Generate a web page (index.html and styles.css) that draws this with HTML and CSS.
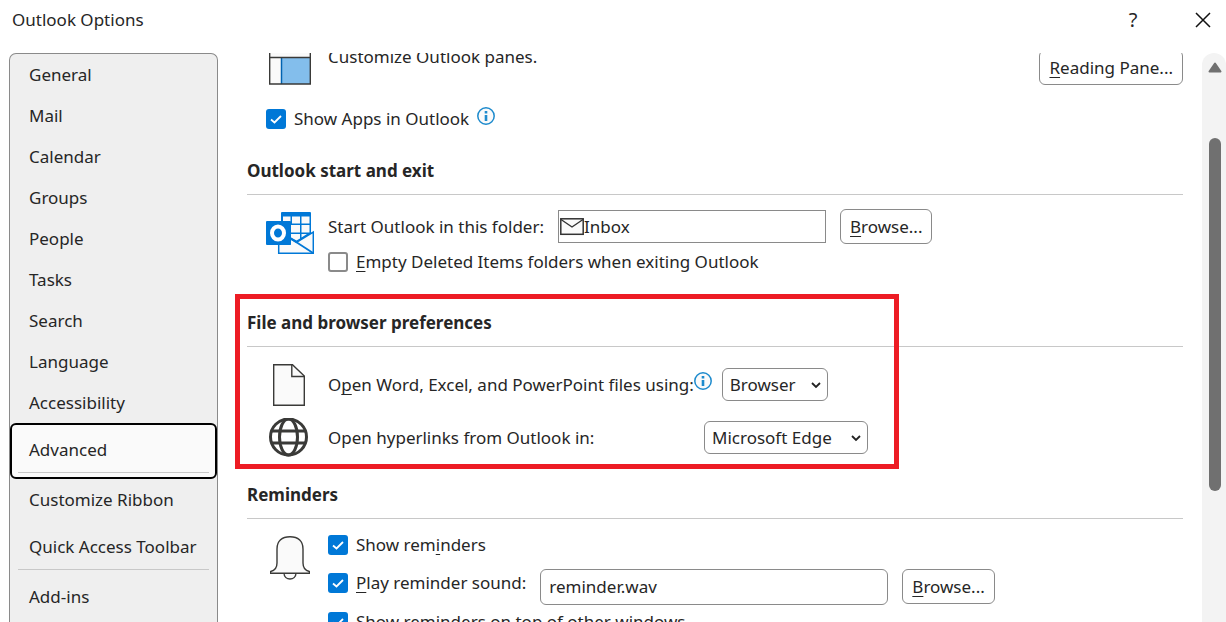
FILE: index.html
```html
<!DOCTYPE html>
<html lang="en">
<head>
  <meta charset="UTF-8" />
  <meta name="viewport" content="width=device-width, initial-scale=1.0"/>
  <title>Outlook Options</title>
  <link rel="stylesheet" href="styles.css">
</head>
<body>
  <header class="titlebar">
    <h1>Outlook Options</h1>
    <button class="title-button help" type="button">?</button>
    <button class="title-button" type="button" aria-label="Close">
      <svg width="16" height="16" viewBox="0 0 16 16"><path d="M1 1L15 15M15 1L1 15" fill="none" stroke="#111" stroke-width="1.5"/></svg>
    </button>
  </header>

  <div class="dialog">
    <nav class="sidebar">
      <a href="#general">General</a>
      <a href="#mail">Mail</a>
      <a href="#calendar">Calendar</a>
      <a href="#groups">Groups</a>
      <a href="#people">People</a>
      <a href="#tasks">Tasks</a>
      <a href="#search">Search</a>
      <a href="#language">Language</a>
      <a href="#accessibility">Accessibility</a>
      <a class="active" href="#advanced">Advanced</a>
      <a href="#ribbon">Customize Ribbon</a>
      <a class="group-end" href="#toolbar">Quick Access Toolbar</a>
      <a class="addins" href="#addins">Add-ins</a>
    </nav>

    <main class="pane">
      <section class="panes">
        <div class="panes-row">
          <svg class="panes-icon" width="42" height="40" viewBox="0 0 42 40">
            <rect x="1" y="-10" width="40" height="49" fill="#fafafa"/>
            <rect x="13" y="13" width="28" height="26" fill="#83beec"/>
            <path d="M12.500 13V39" stroke="#0063b1" stroke-width="1.500"/>
            <path d="M.7 0V39H41.300V0M0 12.500H42" fill="none" stroke="#3a3a38" stroke-width="1.400"/>
          </svg>
          <span>Customize Outlook panes.</span>
          <button class="button" type="button"><u>R</u>eading Pane...</button>
        </div>
        <div class="check-row show-apps">
          <input type="checkbox" id="show-apps" checked>
          <label for="show-apps">Show Apps in Outlook</label>
          <svg class="info" width="18" height="18" viewBox="0 0 18 18"><circle cx="9" cy="9" r="8.200" fill="#fafafa" stroke="#1e8bcd" stroke-width="1.500"/><path d="M9 4V6.500M9 8V14" stroke="#1e8bcd" stroke-width="2.600"/></svg>
        </div>
      </section>

      <section class="start">
        <h2>Outlook start and exit</h2>
        <div class="section-body">
          <svg class="outlook-icon" width="48" height="42" viewBox="0 0 48 42">
            <rect x="15" y="0" width="30" height="30" rx="1" fill="#0078d7"/>
            <path d="M17 4.500h7.500v7H17zM26 4.500h8v7h-8zM35.500 4.500H43.500v7h-8zM25 13h9v7.500h-9zM35.500 13H43.500v7.500h-8zM25 22h9v4.500l-3.500 2L25 25.500zM35.500 22H41l-5.500 3.500z" fill="#fafafa"/>
            <path d="M12.700 32V41.300H47.300V20L30.500 30.300L24 26.500V32z" fill="#fafafa" stroke="#0078d7" stroke-width="1.500"/>
            <path d="M24 26L47 41" stroke="#0078d7" stroke-width="1.800"/>
            <rect x="0" y="9" width="25" height="24" rx="1" fill="#0078d7"/>
            <ellipse cx="12" cy="21" rx="6" ry="6.500" fill="none" stroke="#fff" stroke-width="4"/>
          </svg>
          <div class="fields">
            <div class="field-row">
              <label for="folder">Start Outlook in this folder:</label>
              <div class="folder-box">
                <svg width="24" height="18" viewBox="0 0 24 18"><rect x=".8" y=".8" width="22.400" height="15.500" fill="#fafafa" stroke="#333" stroke-width="1.500"/><path d="M1 1.500L12 9L23 1.500" fill="none" stroke="#333" stroke-width="1.400"/></svg>
                <input type="text" id="folder" value="Inbox">
              </div>
              <button class="button" type="button"><u>B</u>rowse...</button>
            </div>
            <div class="check-row">
              <input type="checkbox" id="empty-deleted">
              <label for="empty-deleted"><u>E</u>mpty Deleted Items folders when exiting Outlook</label>
            </div>
          </div>
        </div>
      </section>

      <section class="files">
        <h2>File and browser preferences</h2>
        <div class="file-row">
          <svg width="44" height="42" viewBox="0 0 44 42"><path d="M6.700.7H25.500L37.300 12V41.300H6.700z" fill="#fafafa" stroke="#3a3a38" stroke-width="1.400"/><path d="M24.800 .7V12.500H37.300" fill="none" stroke="#3a3a38" stroke-width="1.400"/></svg>
          <label for="open-files">O<u>p</u>en Word, Excel, and PowerPoint files using:</label>
          <svg class="info" width="18" height="18" viewBox="0 0 18 18"><circle cx="9" cy="9" r="8.200" fill="#fafafa" stroke="#1e8bcd" stroke-width="1.500"/><path d="M9 4V6.500M9 8V14" stroke="#1e8bcd" stroke-width="2.600"/></svg>
          <select id="open-files" class="browser-select">
            <option>Browser</option>
          </select>
        </div>
        <div class="file-row">
          <svg width="44" height="40" viewBox="0 0 44 40"><g fill="none" stroke="#3a3a38" stroke-width="3"><circle cx="21.500" cy="19" r="18"/><ellipse cx="21.500" cy="19" rx="9" ry="18"/><path d="M4.500 13H38.500M4.500 25H38.500"/></g></svg>
          <label class="links-label" for="open-links">Open hyperlinks from Outlook in:</label>
          <select id="open-links" class="edge-select">
            <option>Microsoft Edge</option>
          </select>
        </div>
      </section>

      <section class="reminders">
        <h2>Reminders</h2>
        <div class="section-body">
          <svg class="bell-icon" width="48" height="46" viewBox="0 0 48 46">
            <path d="M18 38C18 46 30 46 30 38z" fill="#fafafa" stroke="#3a3a38" stroke-width="1.400"/>
            <path d="M11 14C11 6 16 1.700 24 1.700S37 6 37 14V28C37 33 39 35.500 43.300 36.500V38.300H4.700V36.500C9 35.500 11 33 11 28z" fill="#fafafa" stroke="#3a3a38" stroke-width="1.400"/>
          </svg>
          <div class="fields">
            <div class="check-row">
              <input type="checkbox" id="show-reminders" checked>
              <label for="show-reminders">Show rem<u>i</u>nders</label>
            </div>
            <div class="sound-row">
              <div class="check-row">
                <input type="checkbox" id="play-sound" checked>
                <label for="play-sound"><u>P</u>lay reminder sound:</label>
              </div>
              <input class="sound-file" type="text" value="reminder.wav" aria-label="Reminder sound file">
              <button class="button" type="button"><u>B</u>rowse...</button>
            </div>
            <div class="check-row">
              <input type="checkbox" id="on-top" checked>
              <label for="on-top">Show reminders on top of other windows</label>
            </div>
          </div>
        </div>
      </section>
    </main>

    <div class="scrollbar">
      <svg width="14" height="11" viewBox="0 0 14 11"><path d="M7 1.500L12.500 9.500H1.500z" fill="#707070" stroke="#707070" stroke-width="2" stroke-linejoin="round"/></svg>
      <div class="thumb"></div>
    </div>
  </div>
</body>
</html>
```
FILE: styles.css
```css
*,
*::after {
  box-sizing: border-box;
}

body {
  margin: 0;
  height: 100vh;
  display: flex;
  flex-direction: column;
  overflow: hidden;
  background: #fff;
  color: #262626;
  font-family: "Noto Sans", "Open Sans", sans-serif;
  font-size: 17px;
  line-height: 24px;
}

input,
select,
button {
  font: inherit;
  color: inherit;
}

u {
  text-underline-offset: 3px;
  text-decoration-thickness: 1px;
  text-decoration-skip-ink: none;
}

/* Title bar */
.titlebar {
  flex: none;
  display: flex;
  align-items: center;
  height: 53px;
  padding: 0 4px 14px 12px;
}

h1 {
  flex: 1;
  margin: 0;
  font-size: 17px;
  font-weight: 400;
}

.title-button {
  display: flex;
  align-items: center;
  justify-content: center;
  width: 38px;
  height: 32px;
  margin-left: 32px;
  padding: 0;
  border: none;
  background: none;
}

.help {
  font-size: 20px;
}

.dialog {
  flex: 1;
  min-height: 0;
  display: flex;
}

/* Category list */
.sidebar {
  flex: none;
  width: 209px;
  margin-left: 9px;
  overflow: hidden;
  border: 1px solid #8a8a8a;
  border-bottom: none;
  border-radius: 7px 7px 0 0;
  background: #efefef;
}

.sidebar a {
  display: flex;
  align-items: center;
  height: 41px;
  padding: 0 19px;
  color: inherit;
  text-decoration: none;
  white-space: nowrap;
}

.sidebar .active {
  position: relative;
  height: 56px;
  padding: 0 17px 2px;
  border: 2px solid #000;
  border-radius: 6px;
  background: #fafafa;
}

.sidebar .group-end {
  position: relative;
  height: 54px;
}

.active::after,
.group-end::after {
  content: "";
  position: absolute;
  left: 8px;
  right: 8px;
  bottom: 4px;
  border-bottom: 1px solid #c8c8c8;
}

.active::after {
  left: 6px;
  right: 6px;
}

.sidebar .addins {
  height: 46px;
}

/* Options pane */
.pane {
  flex: 1;
  min-width: 0;
  padding: 0 19px 0 29px;
  overflow: hidden;
}

h2 {
  margin: 0;
  padding-bottom: 11px;
  border-bottom: 1px solid #c8c8c8;
  font-size: 17px;
  font-weight: 700;
}

.button {
  height: 35px;
  padding: 0 9px;
  border: 1px solid #8a8a8a;
  border-radius: 6px;
  background: #fff;
}

.check-row {
  display: flex;
  align-items: center;
  gap: 8px;
}

input[type="checkbox"] {
  appearance: none;
  flex: none;
  width: 20px;
  height: 20px;
  margin: 0;
  border: 2px solid #8a8a8a;
  border-radius: 3px;
  background: #fff;
}

input[type="checkbox"]:checked {
  border: none;
  background: #0078d7 url("data:image/svg+xml,%3Csvg xmlns='http://www.w3.org/2000/svg' viewBox='0 0 20 20'%3E%3Cpath d='M5 10.500L8.500 13.500L15 7' fill='none' stroke='white' stroke-width='1.800'/%3E%3C/svg%3E");
}

.info {
  flex: none;
  align-self: flex-start;
}

/* the list is scrolled, so the first row runs under the title bar */
.panes {
  margin-top: -8px;
  padding-bottom: 28px;
}

.panes-row {
  display: flex;
  height: 40px;
}

.panes-icon {
  margin: 0 17px 0 22px;
}

.panes-row .button {
  align-self: flex-end;
  margin-left: auto;
}

.show-apps {
  margin: 22px 0 0 19px;
}

.section-body {
  display: flex;
}

.outlook-icon {
  flex: none;
  margin: 17px 14px 0 19px;
}

.start .fields {
  padding: 14px 0 37px;
}

.field-row {
  display: flex;
  align-items: center;
  margin-bottom: 6px;
}

.folder-box {
  display: flex;
  align-items: center;
  width: 268px;
  height: 33px;
  margin: 0 14px;
  padding-left: 1px;
  border: 1px solid #8a8a8a;
}

.folder-box input {
  flex: 1;
  min-width: 0;
  padding: 0;
  border: none;
  background: none;
}

.files {
  position: relative;
  padding-bottom: 19px;
}

/* red frame round the section */
.files::after {
  content: "";
  position: absolute;
  top: -17px;
  left: -12px;
  bottom: 14px;
  width: 664px;
  border: 5px solid #ed1c24;
  pointer-events: none;
}

.file-row {
  display: flex;
  align-items: center;
  height: 53px;
  padding-left: 20px;
}

h2 + .file-row {
  margin-top: 11px;
}

.file-row label {
  margin-left: 17px;
}

.file-row .info {
  margin-top: 14px;
}

select {
  appearance: none;
  height: 33px;
  padding: 0 7px;
  border: 1px solid #8a8a8a;
  border-radius: 6px;
  background: #fff url("data:image/svg+xml,%3Csvg xmlns='http://www.w3.org/2000/svg' width='10' height='8' viewBox='0 0 10 8'%3E%3Cpath d='M1 2L5 6L9 2' fill='none' stroke='%23222' stroke-width='1.800'/%3E%3C/svg%3E") no-repeat right 6px center;
}

.browser-select {
  width: 106px;
  margin-left: 10px;
}

.file-row .links-label {
  width: 376px;
}

.edge-select {
  width: 164px;
}

.bell-icon {
  flex: none;
  margin: 16px 14px 0 19px;
}

.reminders .fields {
  padding-top: 14px;
}

.sound-row {
  display: flex;
  margin: 12px 0 5px;
}

.sound-row .check-row {
  height: 28px;
}

.sound-file {
  width: 348px;
  height: 36px;
  margin: 0 14px;
  padding: 0 8px 2px;
  border: 1px solid #8a8a8a;
  border-radius: 6px;
}

/* Scroll bar */
.scrollbar {
  flex: none;
  display: flex;
  flex-direction: column;
  align-items: center;
  width: 24px;
  padding: 9px 0 0 1px;
  border-radius: 12px 12px 0 0;
  background: #f3f3f3;
}

.thumb {
  width: 12px;
  height: 63%;
  margin-top: 65px;
  border-radius: 6px;
  background: #707070;
}
```
